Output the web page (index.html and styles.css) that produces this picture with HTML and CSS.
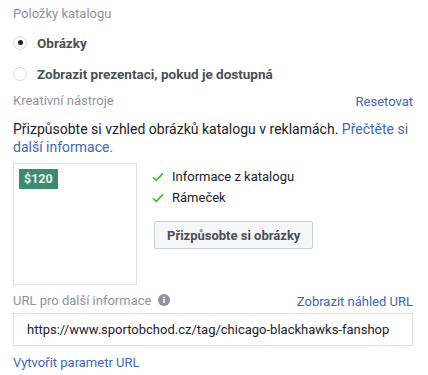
FILE: index.html
```html
<!DOCTYPE html>
<html lang="cs">
<head>
  <meta charset="UTF-8">
  <title>Položky katalogu</title>
  <link rel="stylesheet" href="styles.css">
</head>
<body>
  <div class="panel">
    <div class="label">Položky katalogu</div>
    <div class="radio-row first">
      <span class="radio checked"></span>
      <span class="radio-text">Obrázky</span>
    </div>
    <div class="radio-row">
      <span class="radio"></span>
      <span class="radio-text">Zobrazit prezentaci, pokud je dostupná</span>
    </div>

    <div class="label-row">
      <span class="label">Kreativní nástroje</span>
      <a class="link">Resetovat</a>
    </div>
    <p class="desc">Přizpůsobte si vzhled obrázků katalogu v reklamách. <a class="link">Přečtěte si další informace.</a></p>

    <div class="creative">
      <div class="preview">
        <span class="price">$120</span>
      </div>
      <div class="options">
        <div class="check-item">
          <svg class="check" width="12" height="10" viewBox="0 0 12 10"><path d="M1 5.2 L4.3 8.4 L11 1.4" fill="none" stroke="#42b72a" stroke-width="1.6"/></svg>
          Informace z katalogu
        </div>
        <div class="check-item">
          <svg class="check" width="12" height="10" viewBox="0 0 12 10"><path d="M1 5.2 L4.3 8.4 L11 1.4" fill="none" stroke="#42b72a" stroke-width="1.6"/></svg>
          Rámeček
        </div>
        <button class="btn">Přizpůsobte si obrázky</button>
      </div>
    </div>

    <div class="label-row url-row">
      <span class="label">URL pro další informace
        <svg class="info" width="12" height="12" viewBox="0 0 12 12"><circle cx="6" cy="6" r="6" fill="#8d949e"/><rect x="5.2" y="5" width="1.6" height="4" fill="#fff"/><circle cx="6" cy="3.4" r="0.95" fill="#fff"/></svg>
      </span>
      <a class="link">Zobrazit náhled URL</a>
    </div>
    <div class="url-input">https://www.sportobchod.cz/tag/chicago-blackhawks-fanshop</div>
    <a class="link param">Vytvořit parametr URL</a>
  </div>
</body>
</html>
```

FILE: styles.css
```css
body {
  margin: 0;
  background: #fff;
  font-family: Roboto, "Liberation Sans", sans-serif;
  color: #1d2129;
}
.panel {
  width: 400px;
  padding: 5px 15px 0 13px;
}
.label {
  font-size: 13px;
  color: #90949c;
  line-height: 18px;
}
.radio-row {
  display: flex;
  align-items: center;
  gap: 10px;
  height: 31px;
}
.radio-row.first {
  margin-top: 4px;
}
.radio {
  width: 12px;
  height: 12px;
  border: 1px solid #dadde1;
  border-radius: 50%;
  display: flex;
  align-items: center;
  justify-content: center;
}
.radio.checked::after {
  content: "";
  width: 5px;
  height: 5px;
  border-radius: 50%;
  background: #1d2129;
}
.radio-text {
  font-size: 13.5px;
  font-weight: 700;
  color: #4b4f56;
}
.label-row {
  display: flex;
  justify-content: space-between;
  align-items: center;
  margin-top: 3px;
  height: 18px;
}
.link {
  color: #4267b2;
  font-size: 13px;
  text-decoration: none;
}
.desc {
  margin: 10px 0 0;
  font-size: 14px;
  line-height: 18px;
}
.desc .link {
  font-size: 14px;
}
.creative {
  display: flex;
  gap: 15px;
  margin-top: 7px;
}
.preview {
  width: 124px;
  height: 122px;
  border: 1px solid #dddfe2;
  padding: 4px 5px;
  box-sizing: border-box;
}
.price {
  display: inline-block;
  background: #3e8a6c;
  color: #e8f3ee;
  font-weight: 700;
  font-size: 12.5px;
  padding: 3px 5px;
  line-height: 14px;
}
.options {
  padding-top: 3px;
}
.check-item {
  display: flex;
  align-items: center;
  gap: 8px;
  font-size: 13px;
  color: #1d2129;
  height: 21px;
}
.btn {
  margin-top: 13px;
  margin-left: 2px;
  font-family: inherit;
  font-size: 13px;
  font-weight: 700;
  color: #4b4f56;
  background: #f5f6f7;
  border: 1px solid #ccd0d5;
  border-radius: 2px;
  height: 28px;
  padding: 0 12px;
}
.url-row {
  margin-top: 7px;
}
.info {
  vertical-align: -1px;
  margin-left: 3px;
}
.url-input {
  margin-top: 3px;
  border: 1px solid #dddfe2;
  height: 33px;
  box-sizing: border-box;
  padding: 0 13px;
  display: flex;
  align-items: center;
  font-size: 13px;
  color: #1d2129;
  white-space: nowrap;
}
.param {
  display: block;
  margin-top: 8px;
  line-height: 18px;
}
```
